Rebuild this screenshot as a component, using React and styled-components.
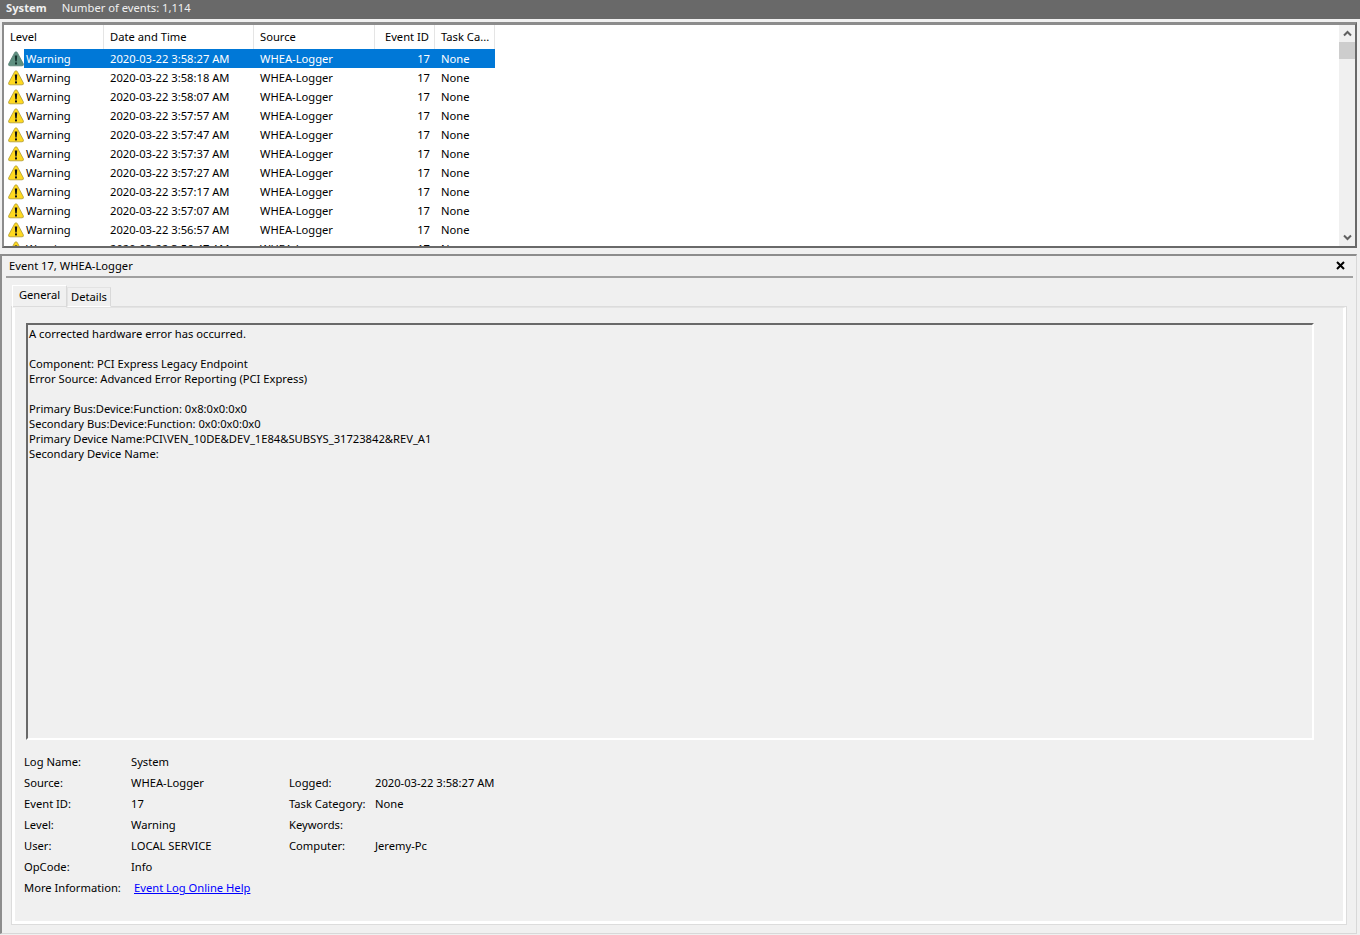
import React from "react";
import styled, { createGlobalStyle } from "styled-components";

const GlobalStyle = createGlobalStyle`
  html, body {
    margin: 0;
    padding: 0;
    background: #f0f0f0;
  }
  body {
    font-family: "Noto Sans", "Open Sans", "Liberation Sans", sans-serif;
    font-size: 11.2px;
    color: #000;
  }
`;

const Page = styled.div`
  width: 1360px;
  height: 935px;
  overflow: hidden;
  display: flex;
  flex-direction: column;
  background: #f0f0f0;
`;

const TitleBar = styled.div`
  height: 19px;
  flex: none;
  display: flex;
  align-items: center;
  gap: 15px;
  padding: 0 6px 5px;
  box-sizing: border-box;
  background: #696969;
  color: #f0f0f0;
`;

const TitleName = styled.span`
  font-weight: 700;
`;

const ListFrame = styled.div`
  height: 221px;
  flex: none;
  box-sizing: content-box;
  margin: 3px 3px 0 2px;
  border: 2px solid #8c8c8c;
  border-top: 3px solid #8c8c8c;
  border-right-color: #696969;
  border-bottom-color: #696969;
  display: flex;
  background: #fff;
`;

const ListArea = styled.div`
  flex: 1;
  overflow: hidden;
`;

const Row = styled.div`
  display: grid;
  grid-template-columns: 100px 150px 121px 60px 60px;
  width: 491px;
  height: ${(p) => (p.$header ? "24px" : "19px")};
  line-height: ${(p) => (p.$header ? "24px" : "19px")};
`;

const HeadCell = styled.div`
  padding: 0 ${(p) => (p.$right ? "5px" : "6px")};
  border-right: 1px solid #e5e5e5;
  text-align: ${(p) => (p.$right ? "right" : "left")};
  white-space: nowrap;
`;

const LevelCell = styled.div`
  display: flex;
  align-items: center;
  padding-left: 4px;
`;

const LevelText = styled.span`
  flex: 1;
  height: 19px;
  padding-left: 2px;
  color: ${(p) => (p.$selected ? "#fff" : "#000")};
  background: ${(p) => (p.$selected ? "#0078d7" : "transparent")};
`;

const Cell = styled.div`
  padding: 0 ${(p) => (p.$right ? "5px" : "6px")};
  text-align: ${(p) => (p.$right ? "right" : "left")};
  color: ${(p) => (p.$selected ? "#fff" : "#000")};
  background: ${(p) => (p.$selected ? "#0078d7" : "transparent")};
  white-space: nowrap;
`;

const ScrollTrack = styled.div`
  width: 16px;
  flex: none;
  display: flex;
  flex-direction: column;
  background: #f0f0f0;
`;

const ScrollButton = styled.div`
  height: 17px;
  flex: none;
  display: flex;
  align-items: center;
  justify-content: center;
  margin-top: ${(p) => (p.$end ? "auto" : "0")};
`;

const ScrollThumb = styled.div`
  height: 17px;
  flex: none;
  background: #cdcdcd;
`;

const DetailPane = styled.div`
  flex: 1;
  margin: 6px 3px 1px 0;
  border-top: 2px solid #8c8c8c;
  border-left: 2px solid #8c8c8c;
  border-right: 1px solid #d8d8d8;
  border-bottom: 1px solid #d8d8d8;
  display: flex;
  flex-direction: column;
`;

const PaneHeader = styled.div`
  height: 18px;
  flex: none;
  margin: 0 3px 0 4px;
  padding: 0 8px 2px 3px;
  display: flex;
  align-items: center;
  justify-content: space-between;
  border-bottom: 2px solid #a0a0a0;
`;

const CloseIcon = styled.svg`
  width: 9px;
  height: 9px;
  display: block;
`;

const TabStrip = styled.div`
  display: flex;
  align-items: flex-end;
  height: 29px;
  flex: none;
  padding-left: 10px;
  position: relative;
  z-index: 1;
`;

const Tab = styled.div`
  box-sizing: border-box;
  width: ${(p) => p.$width}px;
  text-align: center;
  height: ${(p) => (p.$active ? "23px" : "20px")};
  line-height: 18px;
  border: 1px solid #d9d9d9;
  border-left-color: ${(p) => (p.$active ? "#fff" : "#e3e3e3")};
  border-top-color: ${(p) => (p.$active ? "#fff" : "#e3e3e3")};
  border-bottom: ${(p) => (p.$active ? "1px solid #f0f0f0" : "1px solid #fff")};
  margin-bottom: ${(p) => (p.$active ? "-1px" : "0")};
`;

const TabPanel = styled.div`
  box-sizing: border-box;
  height: 617px;
  flex: none;
  margin: 0 10px;
  padding: 15px 29px 0 11px;
  border-style: solid;
  border-width: 1px 3px 3px 3px;
  border-color: #e3e3e3 #fff #fff #fff;
  box-shadow: 0 0 0 1px #dcdcdc;
  display: flex;
  flex-direction: column;
`;

const MessageBox = styled.div`
  box-sizing: border-box;
  height: 417px;
  flex: none;
  padding: 1px 0 0 1px;
  border-style: solid;
  border-width: 2px;
  border-color: #696969 #fff #fff #696969;
  line-height: 15px;
  white-space: pre;
`;

const MetaGrid = styled.div`
  display: grid;
  grid-template-columns: 107px 158px 86px 1fr;
  grid-auto-rows: 21px;
  line-height: 21px;
  margin-top: 11px;
  margin-left: -2px;
`;

const MoreLink = styled.a`
  color: #0000ff;
  text-decoration: underline;
  margin-left: 3px;
`;

const rowTimes = [
  "2020-03-22 3:58:27 AM",
  "2020-03-22 3:58:18 AM",
  "2020-03-22 3:58:07 AM",
  "2020-03-22 3:57:57 AM",
  "2020-03-22 3:57:47 AM",
  "2020-03-22 3:57:37 AM",
  "2020-03-22 3:57:27 AM",
  "2020-03-22 3:57:17 AM",
  "2020-03-22 3:57:07 AM",
  "2020-03-22 3:56:57 AM",
  "2020-03-22 3:56:47 AM",
];

const message = `A corrected hardware error has occurred.

Component: PCI Express Legacy Endpoint
Error Source: Advanced Error Reporting (PCI Express)

Primary Bus:Device:Function: 0x8:0x0:0x0
Secondary Bus:Device:Function: 0x0:0x0:0x0
Primary Device Name:PCI\\VEN_10DE&DEV_1E84&SUBSYS_31723842&REV_A1
Secondary Device Name:`;

function WarningIcon({ selected }) {
  const fill = selected ? "#5f9080" : "#ffd91f";
  const edge = selected ? "#557d72" : "#b09a30";
  const mark = selected ? "#12302a" : "#111";
  return (
    <svg width="16" height="16" viewBox="0 0 16 16" style={{ flex: "none" }}>
      <path
        d="M6.8 1.4 Q8 0.2 9.2 1.4 L15.3 12.8 Q16 14.8 14 14.8 H2 Q0 14.8 0.7 12.8 Z"
        fill={fill}
        stroke={edge}
        strokeWidth="0.8"
      />
      <path d="M6.8 4.5 H9.2 L8.7 10.5 H7.3 Z" fill={mark} />
      <rect x="7" y="11.4" width="2" height="2" fill={mark} />
    </svg>
  );
}

function Chevron({ down }) {
  return (
    <svg width="9" height="7" viewBox="0 0 9 7">
      <path
        d={down ? "M1 1.5 L4.5 5 L8 1.5" : "M1 5.5 L4.5 2 L8 5.5"}
        fill="none"
        stroke="#606060"
        strokeWidth="2"
      />
    </svg>
  );
}

export default function App() {
  return (
    <Page>
      <GlobalStyle />
      <TitleBar>
        <TitleName>System</TitleName>
        <span>Number of events: 1,114</span>
      </TitleBar>

      <ListFrame>
        <ListArea>
          <Row $header>
            <HeadCell>Level</HeadCell>
            <HeadCell>Date and Time</HeadCell>
            <HeadCell>Source</HeadCell>
            <HeadCell $right>Event ID</HeadCell>
            <HeadCell>Task Ca...</HeadCell>
          </Row>
          {rowTimes.map((time, i) => (
            <Row key={time}>
              <LevelCell>
                <WarningIcon selected={i === 0} />
                <LevelText $selected={i === 0}>Warning</LevelText>
              </LevelCell>
              <Cell $selected={i === 0}>{time}</Cell>
              <Cell $selected={i === 0}>WHEA-Logger</Cell>
              <Cell $selected={i === 0} $right>17</Cell>
              <Cell $selected={i === 0}>None</Cell>
            </Row>
          ))}
        </ListArea>
        <ScrollTrack>
          <ScrollButton><Chevron /></ScrollButton>
          <ScrollThumb />
          <ScrollButton $end><Chevron down /></ScrollButton>
        </ScrollTrack>
      </ListFrame>

      <DetailPane>
        <PaneHeader>
          <span>Event 17, WHEA-Logger</span>
          <CloseIcon viewBox="0 0 9 9">
            <path d="M1 1 L8 8 M8 1 L1 8" stroke="#000" strokeWidth="2" />
          </CloseIcon>
        </PaneHeader>
        <TabStrip>
          <Tab $active $width={55}>General</Tab>
          <Tab $width={44}>Details</Tab>
        </TabStrip>
        <TabPanel>
          <MessageBox>{message}</MessageBox>
          <MetaGrid>
            <span>Log Name:</span><span>System</span><span /><span />
            <span>Source:</span><span>WHEA-Logger</span><span>Logged:</span><span>2020-03-22 3:58:27 AM</span>
            <span>Event ID:</span><span>17</span><span>Task Category:</span><span>None</span>
            <span>Level:</span><span>Warning</span><span>Keywords:</span><span />
            <span>User:</span><span>LOCAL SERVICE</span><span>Computer:</span><span>Jeremy-Pc</span>
            <span>OpCode:</span><span>Info</span><span /><span />
            <span>More Information:</span><span><MoreLink href="#">Event Log Online Help</MoreLink></span><span /><span />
          </MetaGrid>
        </TabPanel>
      </DetailPane>
    </Page>
  );
}
